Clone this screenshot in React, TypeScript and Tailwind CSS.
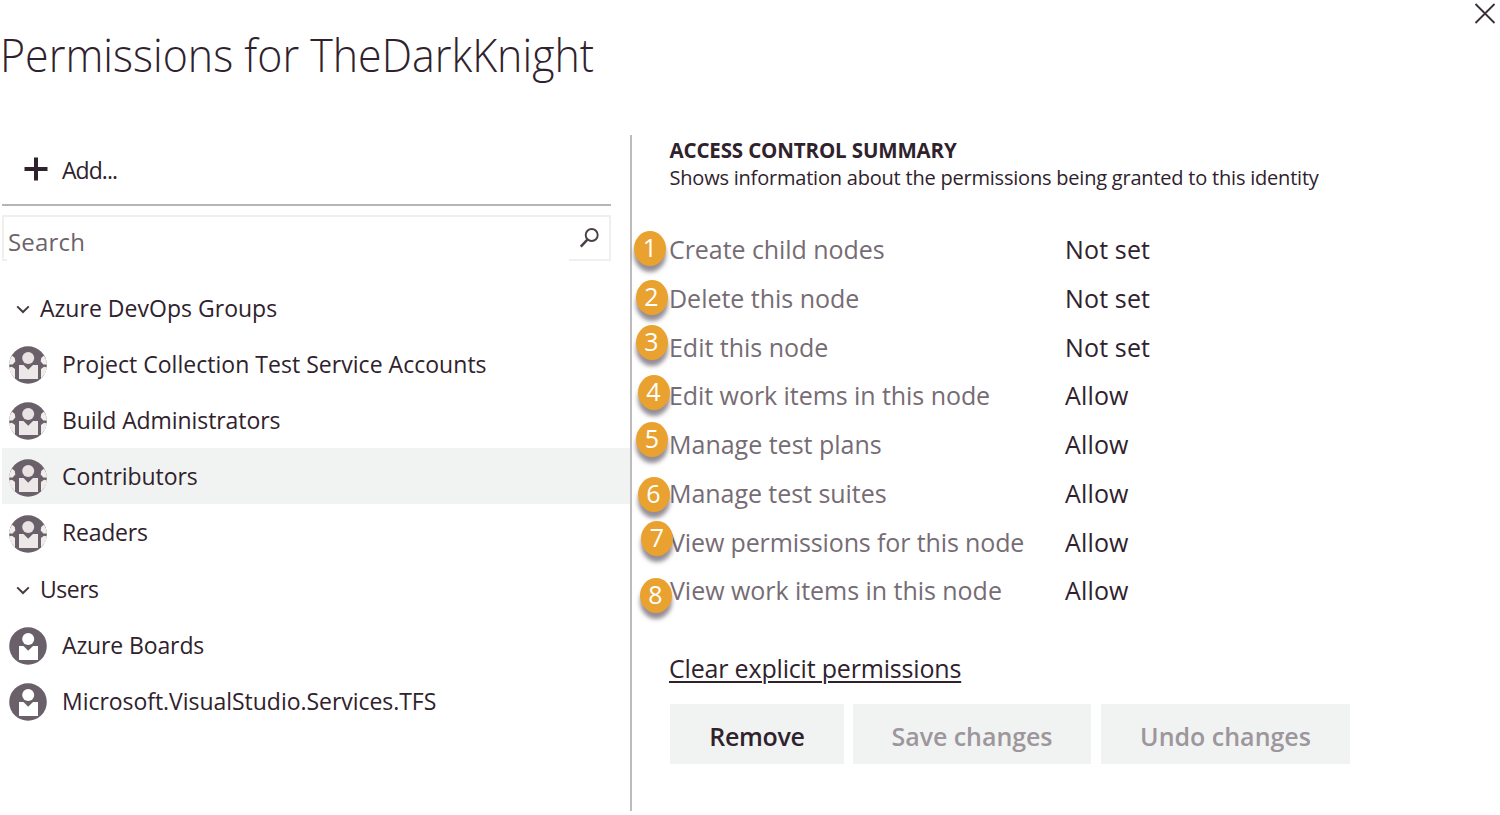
type Permission = { label: string; value: string; badge: string; text: string };

const permissions: Permission[] = [
  { label: "Create child nodes", value: "Not set", badge: "left-[-34px] top-[6px]", text: "tracking-[-0.06px]" },
  { label: "Delete this node", value: "Not set", badge: "left-[-32.5px] top-[5.5px]", text: "tracking-[-0.02px]" },
  { label: "Edit this node", value: "Not set", badge: "left-[-32.5px] top-[2px]", text: "tracking-[-0.02px]" },
  { label: "Edit work items in this node", value: "Allow", badge: "left-[-30.5px] top-[3.5px]", text: "tracking-[-0.06px]" },
  { label: "Manage test plans", value: "Allow", badge: "left-[-32px] top-[1.5px]", text: "" },
  { label: "Manage test suites", value: "Allow", badge: "left-[-30.5px] top-[7.5px]", text: "tracking-[-0.05px]" },
  { label: "View permissions for this node", value: "Allow", badge: "left-[-27px] top-[3.5px]", text: "pl-px tracking-[-0.12px]" },
  { label: "View work items in this node", value: "Allow", badge: "left-[-28.5px] top-[11px]", text: "pl-px tracking-[-0.04px]" },
];

function Avatar({ group }: { group?: boolean }) {
  return (
    <svg viewBox="0 0 38 38" className="h-[38px] w-[38px] shrink-0">
      <circle cx="19" cy="19" r="18.8" fill="#6a6069" />
      {group && (
        <g fill="#f1edeb">
          <path d="M3 9.5 A18.8 18.8 0 0 0 0 18.5 L3.6 18.5 L6.3 15.5 L5.8 12 Z" />
          <path d="M35 9.5 A18.8 18.8 0 0 1 38 18.5 L34.4 18.5 L31.7 15.5 L32.2 12 Z" />
          <path d="M0 21.5 L3 20.8 L6 23 L6 32.5 A18.8 18.8 0 0 1 0 21.5 Z" />
          <path d="M38 21.5 L35 20.8 L32 23 L32 32.5 A18.8 18.8 0 0 0 38 21.5 Z" />
        </g>
      )}
      <circle cx="19.2" cy="12" r="6" fill={group ? "#e8e3e2" : "#fff"} />
      <path d="M10 19 H14.5 L19.2 23.8 L24 19 H29 V33 H10 Z" fill={group ? "#ece8e7" : "#fff"} />
    </svg>
  );
}

function GroupHeader({ name, tracking }: { name: string; tracking: string }) {
  return (
    <div className="flex h-[56.2px] items-center pl-[13.5px]">
      <svg viewBox="0 0 14 9" className="mt-[4px] h-[9px] w-[14px] shrink-0">
        <path d="M1.2 1.4 L7 7 L12.8 1.4" fill="none" stroke="#453b44" strokeWidth="2" />
      </svg>
      <span className={"ml-[10.5px] mt-[2px] whitespace-nowrap " + tracking}>{name}</span>
    </div>
  );
}

function Identity({ name, group, selected, tracking }: { name: string; group?: boolean; selected?: boolean; tracking: string }) {
  return (
    <div className={"flex h-[56.2px] items-center pl-[7px] " + (selected ? "bg-[#f1f3f2]" : "")}>
      <div className="mt-[3px] flex">
        <Avatar group={group} />
      </div>
      <span className={"ml-[15px] mt-px whitespace-nowrap " + tracking}>{name}</span>
    </div>
  );
}

export default function App() {
  return (
    <div className="flex h-[815px] w-[1500px] flex-col overflow-hidden bg-white font-['Open_Sans','Noto_Sans',sans-serif] text-[#2f222d]">
      <header className="flex h-[135px] shrink-0 items-start justify-between">
        <h1 className="mt-[22px] w-[597px] whitespace-nowrap text-[46px] font-light leading-[64px]">
          <span className="inline-block origin-left scale-x-[0.933]">Permissions for TheDarkKnight</span>
        </h1>
        <button className="mr-[4px] mt-[3px]" aria-label="Close">
          <svg viewBox="0 0 22 22" className="h-[22px] w-[22px]">
            <path d="M1.5 1 L20.5 20 M20.5 1 L1.5 20" fill="none" stroke="#3a2e38" strokeWidth="1.8" />
          </svg>
        </button>
      </header>

      <main className="flex h-[676px]">
        <section className="flex w-[630px] shrink-0 flex-col pl-[2px] text-[23px]">
          <button className="flex h-[69px] items-center pl-[21.5px]">
            <svg viewBox="0 0 24 24" className="mt-[-1px] h-[24px] w-[24px]">
              <path d="M12 0.5 V23.5 M0.5 12 H23.5" fill="none" stroke="#2f222d" strokeWidth="4" />
            </svg>
            <span className="ml-[14.5px] mt-px tracking-[-0.95px]">Add...</span>
          </button>
          <div className="mr-[19px] h-[2px] bg-[#b7b4b6]" />
          <div className="mr-[19px] mt-[9px] flex h-[46px] flex-col border-x-2 border-t-2 border-[#f1efec]">
            <div className="flex h-[42px] items-center justify-between pl-[4px] pr-[8px]">
              <span className="mt-[8px] text-[24px] leading-[34px] tracking-[0.2px] text-[#6d636b]">Search</span>
              <svg viewBox="0 0 22 22" className="h-[22px] w-[22px]">
                <circle cx="12.7" cy="8" r="6" fill="none" stroke="#4a3f48" strokeWidth="1.9" />
                <path d="M8.4 12.6 L1.8 19.6" fill="none" stroke="#4a3f48" strokeWidth="2.5" />
              </svg>
            </div>
            <div className="flex h-[2px] justify-between">
              <div className="w-[3px] bg-[#f1efec]" />
              <div className="w-[40px] bg-[#f1efec]" />
            </div>
          </div>

          <div className="mt-[18.4px] flex flex-col">
            <GroupHeader name="Azure DevOps Groups" tracking="tracking-[0.02px]" />
            <Identity group name="Project Collection Test Service Accounts" tracking="tracking-[0.03px]" />
            <Identity group name="Build Administrators" tracking="tracking-[-0.08px]" />
            <Identity group selected name="Contributors" tracking="tracking-[-0.06px]" />
            <Identity group name="Readers" tracking="tracking-[-0.22px]" />
            <GroupHeader name="Users" tracking="tracking-[-0.5px]" />
            <Identity name="Azure Boards" tracking="tracking-[-0.12px]" />
            <Identity name="Microsoft.VisualStudio.Services.TFS" tracking="tracking-[-0.04px]" />
          </div>
        </section>

        <div className="w-[2px] shrink-0 bg-[#bdbbbd]" />

        <section className="flex flex-col pl-[36px]">
          <h2 className="mt-px pl-[1.5px] text-[20.5px] font-bold leading-[28px] tracking-[-0.14px]">ACCESS CONTROL SUMMARY</h2>
          <p className="whitespace-nowrap pl-[1.5px] text-[20px] leading-[28px] tracking-[-0.21px]">
            Shows information about the permissions being granted to this identity
          </p>

          <div className="mt-[33.4px] flex flex-col text-[25px]">
            {permissions.map((p, i) => (
              <div key={p.label} className="relative flex h-[48.75px] items-center">
                <span className={"ml-px w-[396px] whitespace-nowrap text-[#766c74] " + p.text}>{p.label}</span>
                <span className="whitespace-nowrap tracking-[0.15px]">{p.value}</span>
                <span
                  className={
                    "absolute flex h-[35px] w-[32px] items-center justify-center rounded-[50%] bg-[#e9a22f] pb-[3px] text-[25px] leading-[32px] text-white shadow-[0_6px_4px_rgba(60,50,65,0.55)] " +
                    p.badge
                  }
                >
                  {i + 1}
                </span>
              </div>
            ))}
          </div>

          <a className="mt-[35.6px] h-[34px] self-start whitespace-nowrap pl-px text-[25px] leading-[34px] tracking-[-0.18px] underline decoration-2 underline-offset-[3px]">
            Clear explicit permissions
          </a>

          <div className="ml-[2px] mt-[19px] flex text-[25px] font-semibold leading-[34px]">
            <button className="h-[60px] w-[174px] bg-[#f1f3f2] pt-[4px] tracking-[-0.3px]">Remove</button>
            <button className="ml-[9px] h-[60px] w-[238px] bg-[#f1f3f2] pt-[4px] tracking-[-0.05px] text-[#9d969c]">Save changes</button>
            <button className="ml-[10px] h-[60px] w-[249px] bg-[#f1f3f2] pt-[4px] text-[#9d969c]">Undo changes</button>
          </div>
        </section>
      </main>
    </div>
  );
}
